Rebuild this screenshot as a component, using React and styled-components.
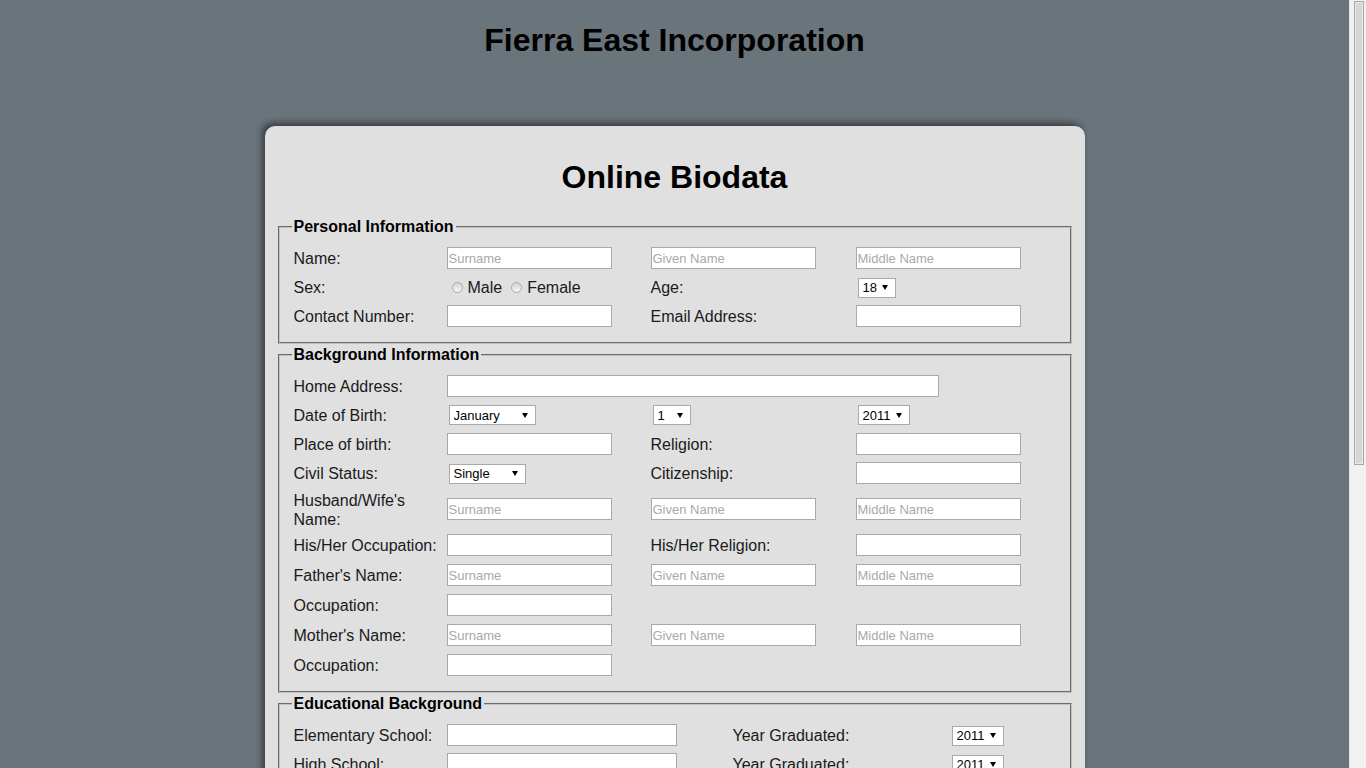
import React from 'react'
import styled, { createGlobalStyle } from 'styled-components'

const FONT = `'Liberation Sans', Arial, sans-serif`

const GlobalStyle = createGlobalStyle`
  html, body { height: 100%; overflow: hidden; }
  body {
    margin: 0;
    background: #6a747b;
    font-family: ${FONT};
    color: #1a1a1a;
  }
`

const MONTHS = ['January', 'February', 'March', 'April', 'May', 'June', 'July',
  'August', 'September', 'October', 'November', 'December']
const DAYS = Array.from({ length: 31 }, (_, i) => String(i + 1))
const YEARS = Array.from({ length: 62 }, (_, i) => String(2011 - i))
const AGES = Array.from({ length: 50 }, (_, i) => String(i + 18))
const STATUS = ['Single', 'Married', 'Widowed', 'Separated']

const PERSONAL = '153px 204px 205px 1fr'
const SCHOOL = '153px 286px 217px 1fr'

// browser window: scrolling page plus its scroll bar
const Shell = styled.div`
  display: flex;
  height: 100vh;
`

const Viewport = styled.div`
  flex: 1;
  min-width: 0;
  overflow-x: hidden;
  overflow-y: auto;
  scrollbar-width: none;

  &::-webkit-scrollbar { display: none; }
`

const Rail = styled.div`
  flex: 0 0 17px;
  box-sizing: border-box;
  padding: 1px 2px 0 4px;
  background: #f1f1f1;
  border-left: 1px solid #e6e6e6;
`

const Thumb = styled.div`
  height: 464px;
  box-sizing: border-box;
  background: #d6d6d6;
  border: 1px solid #a9a9a9;
  box-shadow: inset 0 0 0 1px #e9e9e9;
`

const Page = styled.div`
  padding: 22px 0 60px;
`

const CompanyTitle = styled.h1`
  margin: 0 0 67px;
  text-align: center;
  font-size: 32px;
  font-weight: bold;
  color: #000;
`

const Card = styled.main`
  width: 820px;
  box-sizing: border-box;
  margin: 0 auto;
  padding: 0 11px 30px;
  background: #e0e0e0;
  border-radius: 10px;
  box-shadow: -3px -3px 6px rgba(25, 30, 35, 0.65);
`

const FormTitle = styled.h2`
  margin: 0;
  padding: 33px 0 22px;
  text-align: center;
  font-size: 32px;
  font-weight: bold;
  color: #000;
`

const Section = styled.fieldset`
  margin: 0 2px;
  padding: 5.6px 12px 10px;
  border: 2px groove #c0c0c0;
  min-width: 0;

  & + & { margin-top: 2px; }
`

const Legend = styled.legend`
  padding: 0 2px;
  font-size: 16px;
  font-weight: bold;
  color: #000;
`

const Rows = styled.div`
  display: flex;
  flex-direction: column;
  gap: 2px;
  padding: 3px 0 2px 2px;
`

const Row = styled.div`
  display: grid;
  grid-template-columns: ${p => p.$cols || PERSONAL};
  min-height: ${p => p.$h || 27}px;
  align-items: center;
`

const Label = styled.span`
  font-size: 16px;
  line-height: 19px;
  padding-top: 1px;
  color: #1a1a1a;
`

const TextInput = styled.input`
  box-sizing: border-box;
  width: ${p => p.$w || 165}px;
  height: 22px;
  margin: 0;
  padding: 1px;
  border: 1px solid #a9a9a9;
  background: #fff;
  font: 13px ${FONT};
  color: #000;
  outline: none;

  &::placeholder { color: #a9a9a9; }
`

const Choice = styled.label`
  display: inline-flex;
  align-items: center;
  padding-top: 2px;
  font-size: 16px;
  color: #1a1a1a;
  margin-right: 4px;
`

const Radio = styled.input.attrs({ type: 'radio' })`
  appearance: none;
  box-sizing: border-box;
  width: 11px;
  height: 11px;
  margin: 0 5px 1px 5px;
  border: 1px solid #a9a9a9;
  border-radius: 50%;
  background: linear-gradient(#d4d4d4, #f6f6f6);
`

const SelectFrame = styled.span`
  display: inline-flex;
  align-items: center;
  box-sizing: border-box;
  width: ${p => p.$w}px;
  height: 20px;
  margin: 1px 0 0 2px;
  padding: 0 7px 0 4px;
  background: #fff;
  border: 1px solid #a9a9a9;
`

const SelectField = styled.select`
  appearance: none;
  flex: 1;
  min-width: 0;
  margin: 0;
  padding: 0;
  border: 0;
  background: transparent;
  font: 13px ${FONT};
  color: #000;
  outline: none;
`

const Caret = styled.span`
  width: 0;
  height: 0;
  border-left: 3px solid transparent;
  border-right: 3px solid transparent;
  border-top: 5px solid #000;
`

const Buttons = styled.div`
  display: flex;
  justify-content: center;
  gap: 12px;
  margin-top: 20px;
`

const Button = styled.button`
  font: 14px ${FONT};
  padding: 4px 18px;
  border: 1px solid #9a9a9a;
  border-radius: 3px;
  background: linear-gradient(#fafafa, #dcdcdc);
  color: #111;
`

const Dropdown = ({ w, value, options }) =>
  <SelectFrame $w={w}>
    <SelectField defaultValue={value}>
      {options.map(o => <option key={o}>{o}</option>)}
    </SelectField>
    <Caret />
  </SelectFrame>

const NameInputs = () =>
  <>
    <TextInput placeholder="Surname" />
    <TextInput placeholder="Given Name" />
    <TextInput placeholder="Middle Name" />
  </>

export default function App() {
  return (
    <Shell>
      <GlobalStyle />
      <Viewport>
        <Page>
          <CompanyTitle>Fierra East Incorporation</CompanyTitle>

          <Card>
            <FormTitle>Online Biodata</FormTitle>

            <Section>
              <Legend>Personal Information</Legend>
              <Rows>
                <Row>
                  <Label>Name:</Label>
                  <NameInputs />
                </Row>
                <Row>
                  <Label>Sex:</Label>
                  <span>
                    <Choice><Radio name="sex" />Male</Choice>
                    <Choice><Radio name="sex" />Female</Choice>
                  </span>
                  <Label>Age:</Label>
                  <Dropdown w={38} value="18" options={AGES} />
                </Row>
                <Row>
                  <Label>Contact Number:</Label>
                  <TextInput />
                  <Label>Email Address:</Label>
                  <TextInput />
                </Row>
              </Rows>
            </Section>

            <Section>
              <Legend>Background Information</Legend>
              <Rows>
                <Row>
                  <Label>Home Address:</Label>
                  <TextInput $w={492} />
                </Row>
                <Row>
                  <Label>Date of Birth:</Label>
                  <Dropdown w={87} value="January" options={MONTHS} />
                  <Dropdown w={38} value="1" options={DAYS} />
                  <Dropdown w={52} value="2011" options={YEARS} />
                </Row>
                <Row>
                  <Label>Place of birth:</Label>
                  <TextInput />
                  <Label>Religion:</Label>
                  <TextInput />
                </Row>
                <Row $h={28}>
                  <Label>Civil Status:</Label>
                  <Dropdown w={77} value="Single" options={STATUS} />
                  <Label>Citizenship:</Label>
                  <TextInput />
                </Row>
                <Row $h={40}>
                  <Label>Husband/Wife's Name:</Label>
                  <NameInputs />
                </Row>
                <Row $h={28}>
                  <Label>His/Her Occupation:</Label>
                  <TextInput />
                  <Label>His/Her Religion:</Label>
                  <TextInput />
                </Row>
                <Row $h={28}>
                  <Label>Father's Name:</Label>
                  <NameInputs />
                </Row>
                <Row $h={28}>
                  <Label>Occupation:</Label>
                  <TextInput />
                </Row>
                <Row $h={28}>
                  <Label>Mother's Name:</Label>
                  <NameInputs />
                </Row>
                <Row $h={28}>
                  <Label>Occupation:</Label>
                  <TextInput />
                </Row>
              </Rows>
            </Section>

            <Section>
              <Legend>Educational Background</Legend>
              <Rows>
                {['Elementary School:', 'High School:', 'College:', 'Vocational:'].map(level =>
                  <Row key={level} $cols={SCHOOL}>
                    <Label>{level}</Label>
                    <TextInput $w={230} />
                    <Label>Year Graduated:</Label>
                    <Dropdown w={52} value="2011" options={YEARS} />
                  </Row>
                )}
              </Rows>
            </Section>

            <Section>
              <Legend>Employment Record</Legend>
              <Rows>
                <Row $cols={SCHOOL}>
                  <Label>Company Name:</Label>
                  <TextInput $w={230} />
                  <Label>Position:</Label>
                  <TextInput />
                </Row>
                <Row $cols={SCHOOL}>
                  <Label>Company Address:</Label>
                  <TextInput $w={230} />
                  <Label>Contact Number:</Label>
                  <TextInput />
                </Row>
                <Row $cols={SCHOOL}>
                  <Label>Date Started:</Label>
                  <Dropdown w={52} value="2011" options={YEARS} />
                  <Label>Date Ended:</Label>
                  <Dropdown w={52} value="2011" options={YEARS} />
                </Row>
                <Row $cols={SCHOOL}>
                  <Label>Reason for Leaving:</Label>
                  <TextInput $w={230} />
                </Row>
              </Rows>
            </Section>

            <Section>
              <Legend>Character References</Legend>
              <Rows>
                {[1, 2, 3].map(n =>
                  <Row key={n}>
                    <Label>Reference {n}:</Label>
                    <TextInput placeholder="Full Name" />
                    <TextInput placeholder="Occupation" />
                    <TextInput placeholder="Contact Number" />
                  </Row>
                )}
              </Rows>
            </Section>

            <Buttons>
              <Button type="submit">Submit</Button>
              <Button type="reset">Reset</Button>
            </Buttons>
          </Card>
        </Page>
      </Viewport>
      <Rail>
        <Thumb />
      </Rail>
    </Shell>
  )
}
